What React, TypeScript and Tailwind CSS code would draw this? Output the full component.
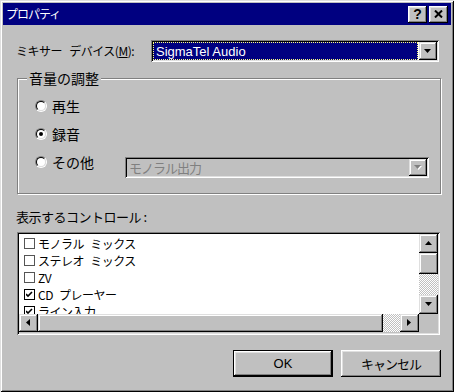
import React from 'react';

const raised =
  'shadow-[inset_-1px_-1px_0_#000,inset_1px_1px_0_#fff,inset_-2px_-2px_0_#808080,inset_2px_2px_0_#dfdfdf]';
const scrollBtn =
  'shadow-[inset_-1px_-1px_0_#000,inset_1px_1px_0_#dfdfdf,inset_-2px_-2px_0_#808080,inset_2px_2px_0_#fff]';
const sunken =
  'shadow-[inset_1px_1px_0_#808080,inset_-1px_-1px_0_#fff,inset_2px_2px_0_#000,inset_-2px_-2px_0_#dfdfdf]';
const checker =
  'bg-[image:repeating-conic-gradient(#fff_0_25%,#c0c0c0_0_50%)] bg-size-[2px_2px]';

const Arrow = ({ dir, color = '#000', shadow = false }: { dir: 'up' | 'down' | 'left' | 'right'; color?: string; shadow?: boolean }) => {
  const pts = {
    down: '0,0 7,0 3.5,4',
    up: '3.5,0 7,4 0,4',
    left: '4,0 4,7 0,3.5',
    right: '0,0 4,3.5 0,7',
  }[dir];
  const w = dir === 'up' || dir === 'down' ? 7 : 4;
  const h = dir === 'up' || dir === 'down' ? 4 : 7;
  return (
    <svg width={w + 1} height={h + 1} viewBox={`0 0 ${w + 1} ${h + 1}`}>
      {shadow && <polygon points={pts} fill="#fff" transform="translate(1,1)" />}
      <polygon points={pts} fill={color} />
    </svg>
  );
};

const Radio = ({ checked }: { checked?: boolean }) => (
  <div className="w-[12px] h-[12px] rounded-full border border-t-[#808080] border-l-[#808080] border-b-white border-r-white">
    <div className="w-full h-full rounded-full border border-t-black border-l-black border-b-[#dfdfdf] border-r-[#dfdfdf] bg-white flex items-center justify-center">
      {checked && <div className="w-[4px] h-[4px] rounded-full bg-black" />}
    </div>
  </div>
);

const Check = ({ checked }: { checked?: boolean }) => (
  <div className={`w-[11px] h-[11px] border bg-white flex items-center justify-center ${checked ? 'border-black' : 'border-[#555]'}`}>
    {checked && (
      <svg width="7" height="7" viewBox="0 0 7 7">
        <path d="M0 3 L2 5 L6 1" stroke="#000" strokeWidth="1.6" fill="none" />
      </svg>
    )}
  </div>
);

const App = () => {
  const items = [
    { label: 'モノラル ミックス', checked: false },
    { label: 'ステレオ ミックス', checked: false },
    { label: 'ZV', checked: false },
    { label: 'CD プレーヤー', checked: true },
    { label: 'ライン入力', checked: true },
  ];

  return (
    <div className="w-[454px] h-[392px] bg-[#c0c0c0] p-[3px] overflow-hidden text-black text-[12px] font-['Noto_Sans_CJK_JP','Liberation_Sans',sans-serif] shadow-[inset_1px_1px_0_#dfdfdf,inset_-1px_-1px_0_#000,inset_2px_2px_0_#fff,inset_-2px_-2px_0_#808080]">
      {/* Title bar */}
      <div className="h-[22px] bg-[#000080] flex items-center justify-between pl-[3px] pr-[3px]">
        <span className="text-white text-[12px] tracking-[-1px] leading-none">プロパティ</span>
        <div className="flex gap-[2px]">
          <div className={`w-[19px] h-[17px] bg-[#c0c0c0] ${raised} flex items-center justify-center`}>
            <span className="font-['Liberation_Sans',sans-serif] font-bold text-[14px] leading-none">?</span>
          </div>
          <div className={`w-[19px] h-[17px] bg-[#c0c0c0] ${raised} flex items-center justify-center`}>
            <svg width="9" height="8" viewBox="0 0 9 8">
              <path d="M1 0.5 L8 7.5 M8 0.5 L1 7.5" stroke="#000" strokeWidth="2" />
            </svg>
          </div>
        </div>
      </div>

      <div className="pl-[13px] flex flex-col">
        {/* Mixer device */}
        <div className="mt-[15px] h-[22px] flex items-center">
          <span className="w-[135px] tracking-[-0.5px] [word-spacing:5px] whitespace-nowrap">
            ミキサー デバイス(<span className="underline">M</span>):
          </span>
          <div className={`w-[288px] h-[22px] bg-white p-[2px] flex ${sunken}`}>
            <div className="flex-1 mr-[1px] bg-[#000080] border border-dotted border-[#ffff80] flex items-center pl-[2px]">
              <span className="text-white text-[13px] font-['Liberation_Sans',sans-serif] leading-none">SigmaTel Audio</span>
            </div>
            <div className={`w-[18px] h-full bg-[#c0c0c0] ${scrollBtn} flex items-center justify-center`}>
              <Arrow dir="down" />
            </div>
          </div>
        </div>

        {/* Volume group */}
        <div className="relative mt-[16px] ml-[1px] w-[424px] h-[116px] border border-[#808080] shadow-[inset_1px_1px_0_#fff,1px_1px_0_#fff]">
          <span className="absolute -top-[10px] left-[9px] px-[2px] bg-[#c0c0c0] text-[14px] leading-[18px]">音量の調整</span>
          <div className="pt-[17px] pl-[17px] flex flex-col gap-[8px]">
            <div className="h-[20px] flex items-center gap-[5px]">
              <Radio />
              <span className="text-[14px]">再生</span>
            </div>
            <div className="h-[20px] flex items-center gap-[5px]">
              <Radio checked />
              <span className="text-[14px]">録音</span>
            </div>
            <div className="flex items-start">
              <div className="w-[90px] h-[20px] flex items-center gap-[5px]">
                <Radio />
                <span className="text-[14px]">その他</span>
              </div>
              <div className={`mt-[5px] w-[304px] h-[21px] bg-[#c0c0c0] p-[2px] flex ${sunken}`}>
                <div className="flex-1 flex items-center pl-[2px] text-[#808080] text-[13px] tracking-[-1px]">モノラル出力</div>
                <div className={`w-[18px] h-full bg-[#c0c0c0] ${scrollBtn} flex items-center justify-center`}>
                  <Arrow dir="down" color="#808080" shadow />
                </div>
              </div>
            </div>
          </div>
        </div>

        {/* Controls list */}
        <div className="mt-[14px] h-[18px] leading-[18px] text-[13px] tracking-[-0.5px]">表示するコントロール :</div>
        <div className={`mt-[6px] ml-[1px] w-[423px] h-[103px] p-[2px] flex flex-col ${sunken}`}>
          <div className="h-[80px] flex">
            <div className="flex-1 bg-white overflow-hidden pt-[1px]">
              {items.map((it, i) => (
                <div key={i} className="h-[17px] flex items-center pl-[5px] gap-[3px]">
                  <Check checked={it.checked} />
                  <span className="text-[12px] tracking-[-0.5px] [word-spacing:4px] leading-none whitespace-nowrap">{it.label}</span>
                </div>
              ))}
            </div>
            <div className="w-[19px] flex flex-col">
              <div className={`h-[19px] bg-[#c0c0c0] ${scrollBtn} flex items-center justify-center`}>
                <Arrow dir="up" />
              </div>
              <div className={`h-[21px] bg-[#c0c0c0] ${scrollBtn}`} />
              <div className={`h-[21px] ${checker}`} />
              <div className={`h-[19px] bg-[#c0c0c0] ${scrollBtn} flex items-center justify-center`}>
                <Arrow dir="down" />
              </div>
            </div>
          </div>
          <div className="h-[18px] flex">
            <div className={`w-[19px] bg-[#c0c0c0] ${scrollBtn} flex items-center justify-center`}>
              <Arrow dir="left" />
            </div>
            <div className={`w-[345px] bg-[#c0c0c0] ${scrollBtn}`} />
            <div className={`w-[17px] ${checker}`} />
            <div className={`w-[19px] bg-[#c0c0c0] ${scrollBtn} flex items-center justify-center`}>
              <Arrow dir="right" />
            </div>
            <div className="flex-1 bg-[#c0c0c0]" />
          </div>
        </div>

        {/* Buttons */}
        <div className="mt-[15px] ml-[217px] flex gap-[8px]">
          <div className="w-[100px] h-[27px] border border-black">
            <div className={`w-full h-full bg-[#c0c0c0] ${raised} flex items-center justify-center font-['Liberation_Sans',sans-serif] text-[13px]`}>
              OK
            </div>
          </div>
          <div className={`w-[100px] h-[27px] bg-[#c0c0c0] ${raised} flex items-center justify-center text-[13px] tracking-[-1px]`}>
            キャンセル
          </div>
        </div>
      </div>
    </div>
  );
};

export default App;
